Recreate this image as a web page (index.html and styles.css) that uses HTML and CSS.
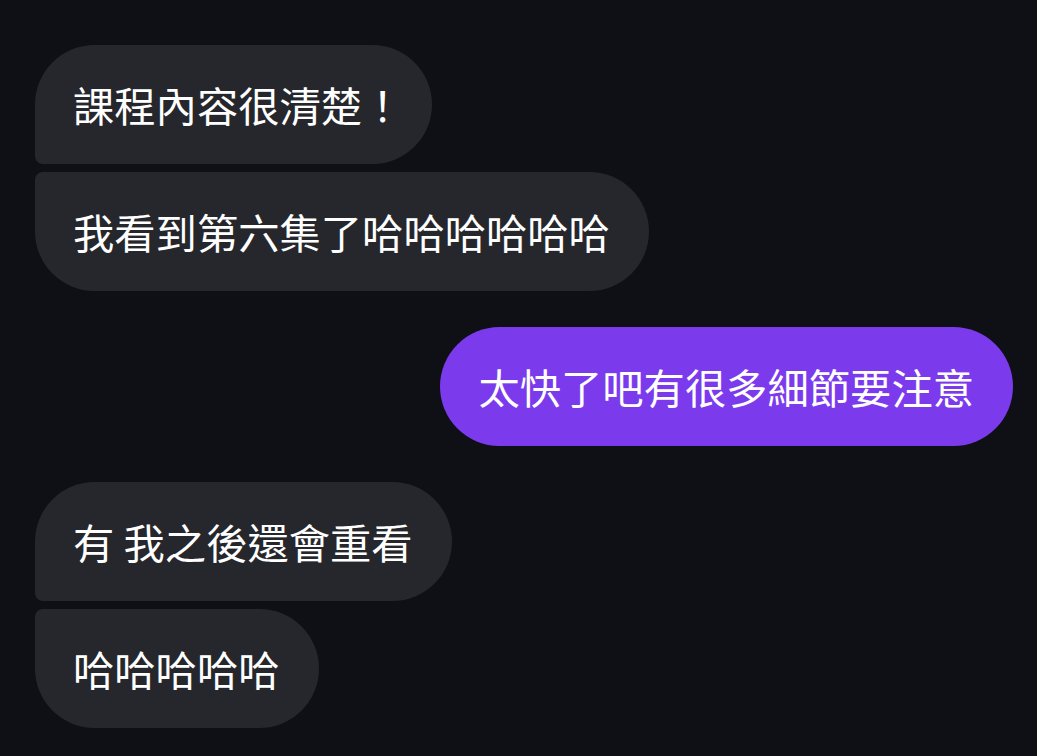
FILE: index.html
```html
<!DOCTYPE html>
<html lang="zh-Hant">
<head>
<meta charset="utf-8">
<link rel="stylesheet" href="styles.css">
</head>
<body>
<main class="chat">
  <div class="group group-in">
    <div class="bubble in first">課程內容很清楚<span class="end-punct">！</span></div>
    <div class="bubble in last">我看到第六集了哈哈哈哈哈哈</div>
  </div>
  <div class="group group-out">
    <div class="bubble out">太快了吧有很多細節要注意</div>
  </div>
  <div class="group group-in">
    <div class="bubble in first">有 我之後還會重看</div>
    <div class="bubble in last">哈哈哈哈哈</div>
  </div>
</main>
</body>
</html>
```

FILE: styles.css
```css
html, body {
  margin: 0;
  padding: 0;
  background: #0e1015;
  height: 100%;
}
body {
  font-family: "Noto Sans CJK TC", "Noto Sans CJK SC", "Noto Sans", sans-serif;
  color: #ffffff;
}
.chat {
  display: flex;
  flex-direction: column;
  gap: 36px;
  padding: 45px 24px 0 35px;
}
.group {
  display: flex;
  flex-direction: column;
  gap: 8px;
}
.group-in { align-items: flex-start; }
.group-out { align-items: flex-end; }
.bubble {
  box-sizing: border-box;
  height: 119px;
  display: flex;
  align-items: center;
  padding: 0 39px 0 38px;
  font-size: 41.3px;
  line-height: 1;
  white-space: nowrap;
  border-radius: 60px;
}
.end-punct { margin-right: -10px; }
.in { background: #25272c; }
.out { background: #7b3bed; }
.in.first { border-bottom-left-radius: 8px; }
.in.last { border-top-left-radius: 8px; }
```
